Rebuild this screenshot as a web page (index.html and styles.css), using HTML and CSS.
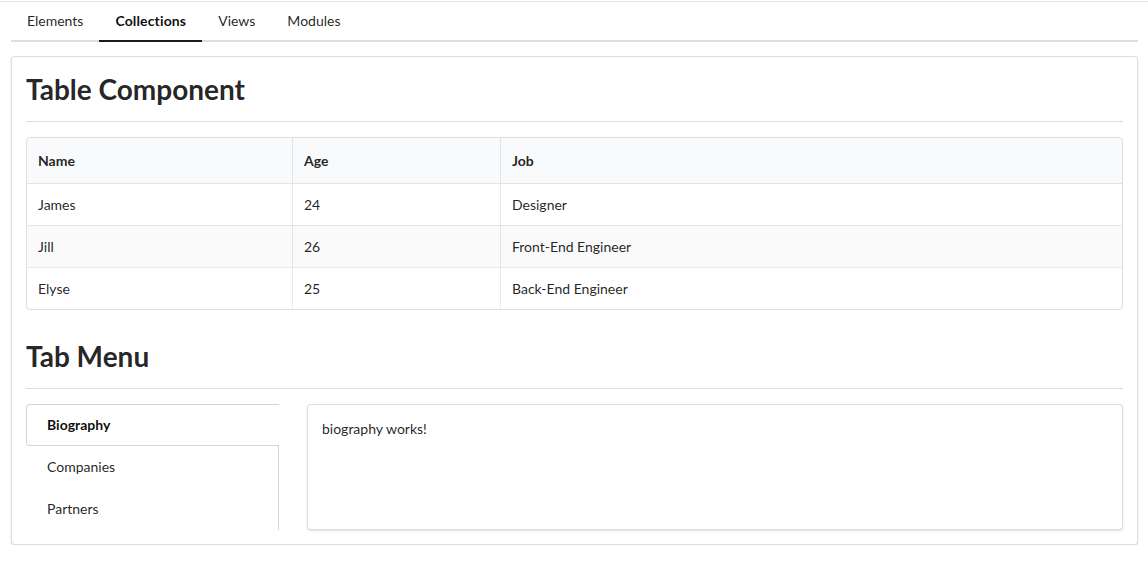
FILE: index.html
```html
<!DOCTYPE html>
<html>
<head>
<meta charset="utf-8">
<link rel="stylesheet" href="styles.css">
</head>
<body>
<div class="page">
  <nav class="tabs">
    <a class="tab">Elements</a>
    <a class="tab active">Collections</a>
    <a class="tab">Views</a>
    <a class="tab">Modules</a>
  </nav>
  <section class="segment main">
    <h1 class="header">Table Component</h1>
    <div class="divider"></div>
    <table class="table">
      <thead>
        <tr><th class="c-name">Name</th><th class="c-age">Age</th><th>Job</th></tr>
      </thead>
      <tbody>
        <tr><td>James</td><td>24</td><td>Designer</td></tr>
        <tr><td>Jill</td><td>26</td><td>Front-End Engineer</td></tr>
        <tr><td>Elyse</td><td>25</td><td>Back-End Engineer</td></tr>
      </tbody>
    </table>
    <h1 class="header second">Tab Menu</h1>
    <div class="divider"></div>
    <div class="tabgrid">
      <div class="vmenu">
        <a class="vitem active">Biography</a>
        <a class="vitem">Companies</a>
        <a class="vitem">Partners</a>
      </div>
      <div class="segment content">biography works!</div>
    </div>
  </section>
</div>
</body>
</html>
```

FILE: styles.css
```css
* { box-sizing: border-box; }
html, body { margin: 0; padding: 0; background: #fff; }
body {
  font-family: Lato, "Helvetica Neue", Arial, sans-serif;
  font-size: 14px;
  line-height: 1.4285em;
  color: rgba(0,0,0,.87);
}
.page {
  margin-top: 1px;
  border-top: 1px solid #e3e3e3;
  padding: 0 10px 0 11px;
}
.tabs {
  display: flex;
  border-bottom: 2px solid rgba(34,36,38,.15);
}
.tab {
  display: block;
  padding: 12px 16px;
  line-height: 1;
  margin-bottom: -2px;
  border-bottom: 2px solid transparent;
  color: rgba(0,0,0,.87);
  cursor: pointer;
}
.tab.active {
  border-bottom-color: #1b1c1d;
  font-weight: 700;
  color: rgba(0,0,0,.95);
  letter-spacing: 0.01em;
}
.segment {
  background: #fff;
  border: 1px solid rgba(34,36,38,.15);
  border-radius: 4px;
  box-shadow: 0 1px 2px 0 rgba(34,36,38,.15);
  padding: 14px;
}
.main { margin-top: 14px; }
.header {
  margin: 0;
  font-size: 28px;
  line-height: 36px;
  font-weight: 700;
  color: rgba(0,0,0,.87);
}
.header.second { margin-top: 28px; }
.divider {
  margin: 14px 0;
  height: 2px;
  border-top: 1px solid rgba(34,36,38,.15);
  border-bottom: 1px solid rgba(255,255,255,.1);
}
.table {
  width: 100%;
  border: 1px solid rgba(34,36,38,.15);
  border-radius: 4px;
  border-collapse: separate;
  border-spacing: 0;
  text-align: left;
}
.table th {
  background: #f9fafb;
  padding: 13px 11px 12px;
  font-weight: 700;
  border-bottom: 1px solid rgba(34,36,38,.1);
  border-left: 1px solid rgba(34,36,38,.1);
  line-height: 20px;
}
.table th:first-child { border-left: none; border-radius: 4px 0 0 0; }
.table th:last-child { border-radius: 0 4px 0 0; }
.table td {
  padding: 11px 11px 10px;
  line-height: 20px;
  border-top: 1px solid rgba(34,36,38,.1);
  border-left: 1px solid rgba(34,36,38,.1);
}
.table td:first-child { border-left: none; }
.table tbody tr:first-child td { border-top: none; }
.table tbody tr:nth-child(2n) { background: rgba(0,0,50,.02); }
.c-name { width: 265px; }
.c-age { width: 208px; }
.tabgrid {
  display: flex;
  gap: 28px;
  align-items: stretch;
}
.vmenu {
  width: 253px;
  flex: none;
  display: flex;
  flex-direction: column;
  border-right: 1px solid #d4d4d5;
}
.vitem {
  display: block;
  padding: 13px 20px;
  line-height: 14px;
  border: 1px solid transparent;
  border-right: none;
  color: rgba(0,0,0,.87);
  cursor: pointer;
}
.vitem.active {
  border-color: #d4d4d5;
  border-radius: 4px 0 0 4px;
  margin-right: -1px;
  background: #fff;
  font-weight: 700;
  color: rgba(0,0,0,.95);
}
.content { flex: 1; }
```
